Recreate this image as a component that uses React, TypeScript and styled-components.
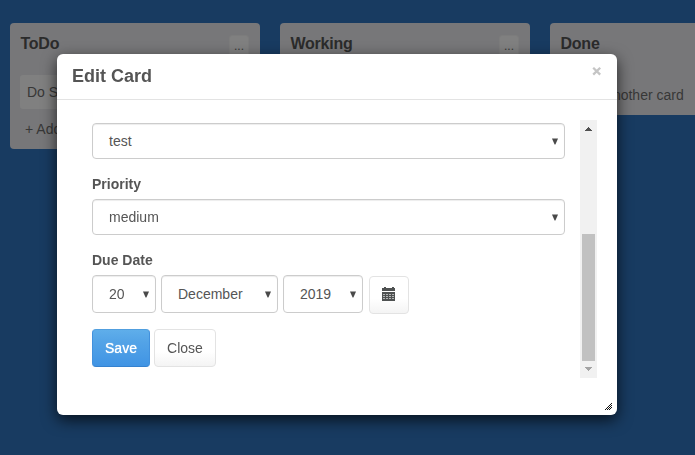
import React from "react";
import styled, { createGlobalStyle } from "styled-components";

const GlobalStyle = createGlobalStyle`
  * { box-sizing: border-box; }
  html, body, #root { height: 100%; }
  body {
    margin: 0;
    overflow: hidden;
    background: #183b61;
    color: #555;
    font: 14px/20px "Liberation Sans", Arial, sans-serif;
  }
  button { font: inherit; color: inherit; margin: 0; }
`;

const Board = styled.main`
  display: flex;
  align-items: flex-start;
  gap: 20px;
  overflow: hidden;
  padding: 23px 0 0 10px;
`;

const List = styled.section`
  flex: 0 0 250px;
  padding: 0 10px 10px;
  border-radius: 4px;
  background: #777779;
  color: #373737;
`;

const ListHeader = styled.header`
  display: flex;
  justify-content: space-between;
  height: 52px;
`;

const ListTitle = styled.h2`
  margin: 11px 0 0;
  padding-left: 0.4px;
  font-size: 16px;
  line-height: 20px;
  font-weight: bold;
  letter-spacing: -0.2px;
  color: #2b2b2b;
`;

const MenuButton = styled.button`
  width: 20px;
  height: 22px;
  margin: 12px 1px 0 0;
  padding: 0;
  border: 1px solid #7c7c7c;
  border-radius: 3px;
  background: #808080;
  font-size: 12px;
  line-height: 18px;
`;

const Card = styled.article`
  height: 34px;
  padding: 7px;
  border-radius: 3px;
  background: #808080;
`;

const AddCard = styled.div`
  height: 20px;
  margin-top: 10px;
  padding-left: 5px;
`;

const Modal = styled.div`
  position: fixed;
  top: 54px;
  left: 57px;
  width: 560px;
  height: 361px;
  border-radius: 6px;
  background: #fff;
  box-shadow: 0 5px 15px rgba(0, 0, 0, 0.7);
`;

const ModalHeader = styled.header`
  display: flex;
  justify-content: space-between;
  height: 46px;
  padding: 0 15px;
  border-bottom: 1px solid #e3e3e3;
`;

const ModalTitle = styled.h1`
  margin: 0;
  font-size: 18px;
  line-height: 44px;
`;

const DismissButton = styled.button`
  width: 11px;
  height: 12px;
  margin-top: 11px;
  padding: 0;
  border: 0;
  background: none;
  svg { display: block; }
`;

const ScrollArea = styled.div`
  display: flex;
  justify-content: space-between;
  height: 258px;
  margin: 20px 20px 0 35px;
`;

const Form = styled.form`
  width: 473px;
  padding-top: 3px;
`;

const Field = styled.div`
  margin-bottom: 15px;
`;

const Label = styled.label`
  display: block;
  height: 25px;
  font-weight: bold;
`;

const SelectBox = styled.div<{ $width?: number; $height?: number }>`
  display: flex;
  align-items: center;
  justify-content: space-between;
  width: ${(p) => (p.$width ? `${p.$width}px` : "100%")};
  height: ${(p) => p.$height ?? 36}px;
  padding: 0 6px 0 16px;
  border: 1px solid #ccc;
  border-radius: 4px;
  background: #fff;
  box-shadow: inset 0 1px 1px rgba(0, 0, 0, 0.075);
`;

const DateRow = styled.div`
  display: flex;
  gap: 5px;
`;

const Button = styled.button<{ $primary?: boolean; $width: number }>`
  display: flex;
  align-items: center;
  justify-content: center;
  width: ${(p) => p.$width}px;
  height: 38px;
  padding: 0;
  border: 1px solid;
  border-color: ${(p) => (p.$primary ? "#519fdf #4291dd #3582cf" : "#e3e3e3")};
  border-radius: 4px;
  background: ${(p) =>
    p.$primary
      ? "linear-gradient(#5faeea, #54a4e7 30%, #4094e4)"
      : "linear-gradient(#fff, #fff 60%, #f4f4f4)"};
  color: ${(p) => (p.$primary ? "#fff" : "#555")};
  text-shadow: ${(p) => (p.$primary ? "0 0 1px #fff" : "none")};
`;

const CalendarButton = styled(Button)`
  margin: 1px 0 0 1px;
  padding-bottom: 2px;
`;

const Actions = styled.div`
  display: flex;
  gap: 4px;
`;

const Scrollbar = styled.div`
  display: flex;
  flex-direction: column;
  width: 17px;
  height: 258px;
  background: #f1f1f1;
`;

const ScrollStep = styled.div`
  height: 17px;
  svg { display: block; }
`;

const Track = styled.div`
  flex: 1;
  padding: 97px 2px 0;
`;

const Thumb = styled.div`
  height: 127px;
  background: #c1c1c1;
`;

const ResizeHandle = styled.div`
  position: absolute;
  right: 5px;
  bottom: 5px;
  width: 7px;
  height: 7px;
  svg { display: block; }
`;

const DropArrow = () => (
  <svg width="6" height="7" viewBox="0 0 6 7">
    <path d="M0 0.5H6L3.4 6.5H2.6Z" fill="#4a4a4a" />
  </svg>
);

const CalendarIcon = () => (
  <svg width="14" height="14" viewBox="0 0 14 14" shapeRendering="crispEdges">
    <path d="M0 1H2V0H4V1H10V0H12V1H13V4H0ZM0 5H13V14H0Z" fill="#4f5252" />
    <path
      d="M1 7.5H12M1 9.5H12M1 11.5H12"
      stroke="#b4b6b6"
      strokeDasharray="2 1"
    />
  </svg>
);

const ResizeIcon = () => (
  <svg width="7" height="7" viewBox="0 0 7 7" shapeRendering="crispEdges">
    <path
      d="M6 0h1v1h-1zM5 1h1v1h-1zM4 2h1v1h-1zM6 2h1v1h-1zM3 3h1v1h-1zM5 3h1v1h-1zM2 4h1v1h-1zM4 4h1v1h-1zM6 4h1v1h-1zM1 5h1v1h-1zM3 5h1v1h-1zM5 5h1v1h-1zM0 6h1v1h-1zM2 6h1v1h-1zM4 6h1v1h-1z"
      fill="#111"
    />
  </svg>
);

type SelectProps = { value: string; width?: number; height?: number };

const Select = ({ value, width, height }: SelectProps) => (
  <SelectBox $width={width} $height={height}>
    <span>{value}</span>
    <DropArrow />
  </SelectBox>
);

type BoardListProps = { title: string; cards?: string[]; menu?: boolean };

const BoardList = ({ title, cards = [], menu }: BoardListProps) => (
  <List>
    <ListHeader>
      <ListTitle>{title}</ListTitle>
      {menu && <MenuButton>...</MenuButton>}
    </ListHeader>
    {cards.map((card) => (
      <Card key={card}>{card}</Card>
    ))}
    <AddCard>+ Add another card</AddCard>
  </List>
);

export default function App() {
  return (
    <>
      <GlobalStyle />
      <Board>
        <BoardList title="ToDo" cards={["Do Something"]} menu />
        <BoardList title="Working" menu />
        <BoardList title="Done" />
      </Board>
      <Modal role="dialog" aria-label="Edit Card">
        <ModalHeader>
          <ModalTitle>Edit Card</ModalTitle>
          <DismissButton type="button" aria-label="Close dialog">
            <svg width="11" height="12" viewBox="0 0 11 12">
              <path d="M2.2 2.8L9.2 9.6M9.2 2.8L2.2 9.6" stroke="#c5c5c5" strokeWidth="2.3" />
            </svg>
          </DismissButton>
        </ModalHeader>
        <ScrollArea>
          <Form>
            <Field>
              <Select value="test" />
            </Field>
            <Field>
              <Label>Priority</Label>
              <Select value="medium" />
            </Field>
            <Field>
              <Label>Due Date</Label>
              <DateRow>
                <Select value="20" width={64} height={38} />
                <Select value="December" width={117} height={38} />
                <Select value="2019" width={80} height={38} />
                <CalendarButton type="button" $width={40} aria-label="Pick a date">
                  <CalendarIcon />
                </CalendarButton>
              </DateRow>
            </Field>
            <Actions>
              <Button type="button" $primary $width={58}>Save</Button>
              <Button type="button" $width={62}>Close</Button>
            </Actions>
          </Form>
          <Scrollbar>
            <ScrollStep>
              <svg width="17" height="17" viewBox="0 0 17 17" shapeRendering="crispEdges">
                <path d="M5 11V10H6V9H7V8H8V7H9V8H10V9H11V10H12V11Z" fill="#505050" />
              </svg>
            </ScrollStep>
            <Track>
              <Thumb />
            </Track>
            <ScrollStep>
              <svg width="17" height="17" viewBox="0 0 17 17" shapeRendering="crispEdges">
                <path d="M5 6V7H6V8H7V9H8V10H9V9H10V8H11V7H12V6Z" fill="#a3a3a3" />
              </svg>
            </ScrollStep>
          </Scrollbar>
        </ScrollArea>
        <ResizeHandle>
          <ResizeIcon />
        </ResizeHandle>
      </Modal>
    </>
  );
}
